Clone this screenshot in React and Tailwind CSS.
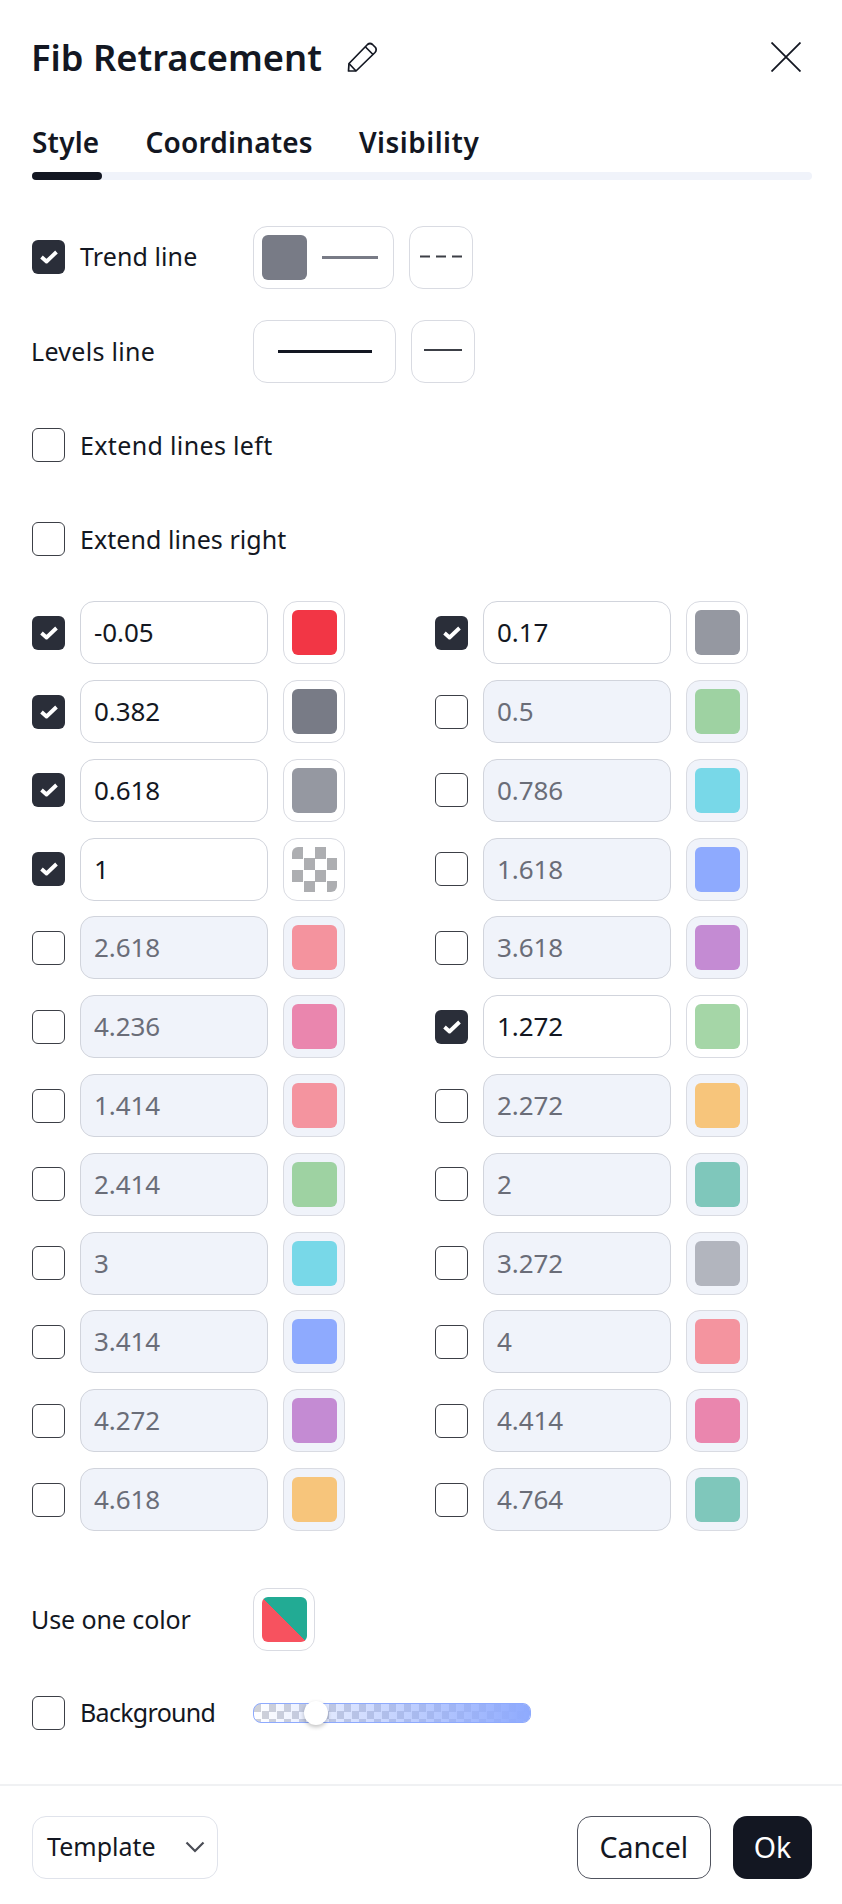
const CheckIcon = () => (
  <svg width="20" height="16" viewBox="0 0 20 16" fill="none">
    <path d="M2.5 8 L7.5 12.5 L17.5 3" stroke="#fff" strokeWidth="3.8" strokeLinejoin="round" />
  </svg>
);

const Checkbox = ({ checked }) =>
  checked ? (
    <div className="w-[33px] h-[34px] shrink-0 rounded-[6px] bg-[#2a2e39] flex items-center justify-center">
      <CheckIcon />
    </div>
  ) : (
    <div className="w-[33px] h-[34px] shrink-0 rounded-[6px] bg-white border-[1.5px] border-[#3c3f46]" />
  );

const levelsLeft = [
  ["-0.05", true, "bg-[#f23645]"],
  ["0.382", true, "bg-[#787b86]"],
  ["0.618", true, "bg-[#9598a1]"],
  ["1", true, "checker"],
  ["2.618", false, "bg-[#f4939e]"],
  ["4.236", false, "bg-[#ea86ae]"],
  ["1.414", false, "bg-[#f4949f]"],
  ["2.414", false, "bg-[#9ed2a2]"],
  ["3", false, "bg-[#78d8e8]"],
  ["3.414", false, "bg-[#8eaafe]"],
  ["4.272", false, "bg-[#c48bd3]"],
  ["4.618", false, "bg-[#f7c57b]"],
];

const levelsRight = [
  ["0.17", true, "bg-[#9598a1]"],
  ["0.5", false, "bg-[#9ed2a2]"],
  ["0.786", false, "bg-[#78d8e8]"],
  ["1.618", false, "bg-[#8eaafe]"],
  ["3.618", false, "bg-[#c48bd3]"],
  ["1.272", true, "bg-[#a5d6a7]"],
  ["2.272", false, "bg-[#f7c57b]"],
  ["2", false, "bg-[#7fc7bb]"],
  ["3.272", false, "bg-[#b2b5be]"],
  ["4", false, "bg-[#f4949f]"],
  ["4.414", false, "bg-[#ea86ae]"],
  ["4.764", false, "bg-[#7fc7bb]"],
];

const LevelRow = ({ value, checked, color }) => (
  <div className="flex items-center h-[63px]">
    <Checkbox checked={checked} />
    <div
      className={`ml-[15px] w-[188px] h-[63px] rounded-[14px] border border-[#d1d4dc] flex items-center pl-[13px] text-[26px] tracking-[-0.1px] ${
        checked ? "bg-white text-[#131722]" : "bg-[#f0f3fa] text-[#6a6d78]"
      }`}
    >
      {value}
    </div>
    <div
      className={`ml-[15px] w-[62px] h-[63px] rounded-[14px] border border-[#d9dbe2] flex items-center justify-center ${
        checked ? "bg-white" : "bg-[#f0f3fa]"
      }`}
    >
      {color === "checker" ? (
        <div className="w-[45px] h-[45px] rounded-[6px] bg-[conic-gradient(#fff_25%,#adaeb1_0_50%,#fff_0_75%,#adaeb1_0)] bg-[length:23px_23px]" />
      ) : (
        <div className={`w-[45px] h-[45px] rounded-[6px] ${color}`} />
      )}
    </div>
  </div>
);

export default function App() {
  return (
    <div className="w-[842px] h-[1904px] bg-white text-[#131722] font-['Noto_Sans','Open_Sans',sans-serif] overflow-hidden">
      {/* Header */}
      <div className="h-[113px] px-8 flex items-center">
        <h1 className="text-[36.3px] leading-[44px] font-semibold -ml-px">Fib Retracement</h1>
        <svg className="ml-[24px]" width="32" height="32" viewBox="0 0 32 32" fill="none" stroke="#131722" strokeWidth="1.7" strokeLinejoin="round">
          <path d="M2.5 30 L3 22.5 L21.5 3.5 Q24 1.5 26.5 3.5 L29.5 6.5 Q31 9 29 11.5 L10 30 Z" />
          <path d="M19.5 6 L27 13.5 M3 22.5 L10 30" />
        </svg>
        <svg className="ml-auto mr-[9px]" width="30" height="30" viewBox="0 0 30 30" fill="none" stroke="#131722" strokeWidth="1.8">
          <path d="M0.5 0.5 L29.5 29.5 M29.5 0.5 L0.5 29.5" />
        </svg>
      </div>

      {/* Tabs */}
      <div className="pl-8 pr-[30px]">
        <div className="mt-[14px] flex gap-[46px] text-[28px] leading-[30px] font-semibold tracking-[0.2px]">
          <span>Style</span>
          <span>Coordinates</span>
          <span className="tracking-[0.5px]">Visibility</span>
        </div>
        <div className="mt-[15.3px] h-[8px] rounded-full bg-[#f0f3fa]">
          <div className="w-[70px] h-full rounded-full bg-[#131722]" />
        </div>
      </div>

      {/* Lines */}
      <div className="px-8 mt-[45.7px] flex flex-col gap-[31px] text-[25px]">
        <div className="h-[63px] flex items-center">
          <Checkbox checked />
          <span className="ml-[15px] w-[173px] tracking-[0.1px] -mt-[2px]">Trend line</span>
          <div className="w-[141px] h-[63px] rounded-[14px] border border-[#d9dbe2] flex items-center pl-[8px]">
            <div className="w-[45px] h-[45px] rounded-[6px] bg-[#787b86]" />
            <div className="ml-[15px] w-[56px] h-[3px] bg-[#787b86]" />
          </div>
          <div className="ml-[15px] w-[64px] h-[63px] rounded-[14px] border border-[#d9dbe2] flex items-center justify-center">
            <svg className="mb-[2px]" width="42" height="3" viewBox="0 0 42 3">
              <path d="M0 1.5 H10 M16 1.5 H26 M32 1.5 H42" stroke="#3c3f46" strokeWidth="2" />
            </svg>
          </div>
        </div>
        <div className="h-[63px] flex items-center">
          <span className="w-[221px] tracking-[0.3px] -ml-px">Levels line</span>
          <div className="ml-px w-[143px] h-[63px] rounded-[14px] border border-[#d9dbe2] flex items-center justify-center">
            <div className="w-[94px] h-[3px] bg-[#131722]" />
          </div>
          <div className="ml-[15px] w-[64px] h-[63px] rounded-[14px] border border-[#d9dbe2] flex items-center justify-center">
            <div className="mb-[2px] w-[38px] h-[2px] bg-[#3c3f46]" />
          </div>
        </div>
        <div className="h-[63px] flex items-center">
          <Checkbox />
          <span className="ml-[15px] tracking-[0.35px]">Extend lines left</span>
        </div>
        <div className="h-[63px] flex items-center">
          <Checkbox />
          <span className="ml-[15px] tracking-[0.07px]">Extend lines right</span>
        </div>
      </div>

      {/* Levels */}
      <div className="px-8 mt-[30.3px] grid grid-cols-[403px_1fr]">
        <div className="flex flex-col gap-[15.8px]">
          {levelsLeft.map(([value, checked, color]) => (
            <LevelRow key={value} value={value} checked={checked} color={color} />
          ))}
        </div>
        <div className="flex flex-col gap-[15.8px]">
          {levelsRight.map(([value, checked, color]) => (
            <LevelRow key={value} value={value} checked={checked} color={color} />
          ))}
        </div>
      </div>

      {/* Use one color + background */}
      <div className="px-8 mt-[57.3px] text-[25px]">
        <div className="h-[63px] flex items-center">
          <span className="w-[221px] tracking-[-0.1px] -ml-px">Use one color</span>
          <div className="ml-px w-[62px] h-[63px] rounded-[14px] border border-[#d9dbe2] flex items-center justify-center">
            <div className="w-[45px] h-[45px] rounded-[6px] bg-[linear-gradient(to_top_right,#f7525f_50%,#22ab94_50%)]" />
          </div>
        </div>
        <div className="mt-[30.2px] h-[63px] flex items-center">
          <Checkbox />
          <span className="ml-[15px] w-[173px] tracking-[-0.7px]">Background</span>
          <div className="relative w-[278px] h-[20px] rounded-[8px] border border-[#8eaafe] bg-[conic-gradient(#fff_25%,#cfd1d8_0_50%,#fff_0_75%,#cfd1d8_0)] bg-[length:15px_15px]">
            <div className="absolute inset-0 rounded-[7px] bg-[linear-gradient(90deg,rgba(142,170,254,0)_0%,#8eaafe_100%)]" />
            <div className="absolute left-[50px] top-[-3px] w-[24px] h-[24px] rounded-full bg-white shadow-[0_2px_4px_rgba(0,0,0,0.25)]" />
          </div>
        </div>
      </div>

      {/* Footer */}
      <div className="mt-[39.5px] border-t-2 border-[#f0f1f3] pl-8 pr-[30px] pt-[29.5px] flex items-center text-[25px]">
        <div className="w-[186px] h-[63px] rounded-[14px] border border-[#e0e3eb] flex items-center pl-[14px]">
          <span>Template</span>
          <svg className="ml-auto mr-[12px]" width="20" height="12" viewBox="0 0 20 12" fill="none" stroke="#4a4d55" strokeWidth="2.2">
            <path d="M1.5 1.5 L10 10 L18.5 1.5" />
          </svg>
        </div>
        <div className="ml-auto w-[133.5px] h-[63px] rounded-[14px] border-[1.5px] border-[#50535e] flex items-center justify-center text-[28.5px]">
          Cancel
        </div>
        <div className="ml-[22.5px] w-[79px] h-[63px] rounded-[14px] bg-[#131722] text-white flex items-center justify-center text-[28.5px]">
          Ok
        </div>
      </div>
    </div>
  );
}
